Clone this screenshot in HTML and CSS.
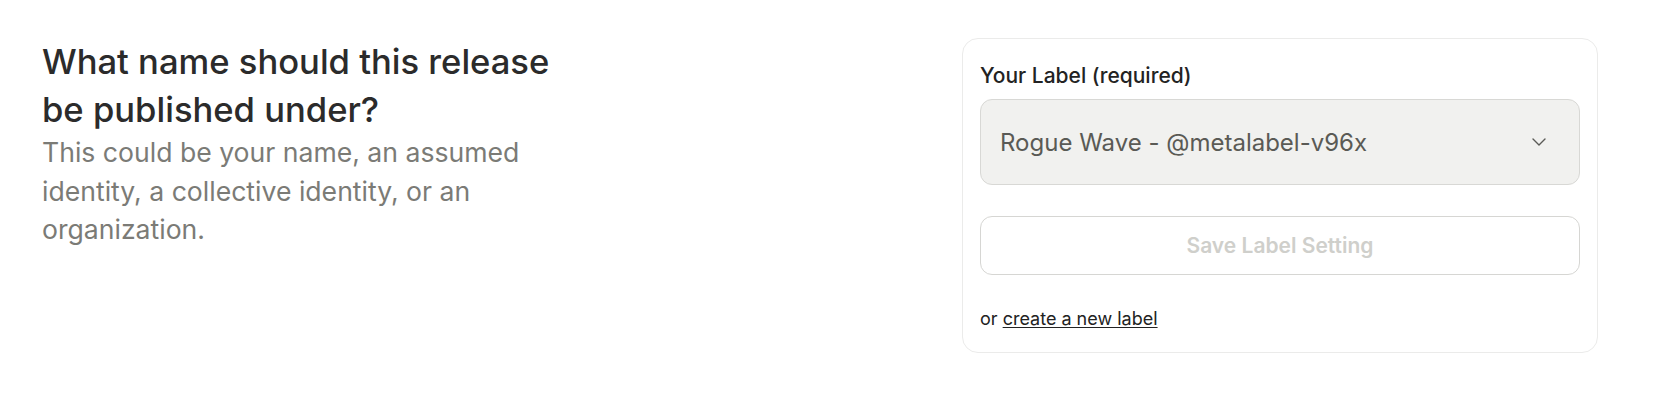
FILE: index.html
```html
<!DOCTYPE html>
<html lang="en">
<head>
<meta charset="utf-8">
<title>Label setting</title>
<link rel="stylesheet" href="styles.css">
</head>
<body>
<main class="page">
  <section class="intro">
    <h2 class="intro-title">What name should this release be published under?</h2>
    <p class="intro-text">This could be your name, an assumed identity, a collective identity, or an organization.</p>
  </section>
  <section class="card">
    <label class="field-label" for="label-select">Your Label (required)</label>
    <div class="select">
      <span class="select-value" id="label-select">Rogue Wave - @metalabel-v96x</span>
      <svg class="chevron" width="14" height="8" viewBox="0 0 14 8" aria-hidden="true"><path d="M1 1l6 6 6-6" fill="none" stroke="#5b5b57" stroke-width="1.4" stroke-linecap="round" stroke-linejoin="round"/></svg>
    </div>
    <button class="save-btn" type="button" disabled>Save Label Setting</button>
    <p class="alt">or <a href="#" class="alt-link">create a new label</a></p>
  </section>
</main>
</body>
</html>
```
FILE: styles.css
```css
* { box-sizing: border-box; }
html, body { margin: 0; padding: 0; background: #ffffff; }
body { font-family: Inter, "Noto Sans", sans-serif; color: #222222; }

.page {
  display: flex;
  justify-content: space-between;
  align-items: flex-start;
  padding: 38px 60px 0 42px;
}

.intro { width: 540px; }
.intro-title {
  margin: 0;
  font-size: 34.6px;
  line-height: 47.6px;
  font-weight: 500;
  color: #2b2b2b;
}
.intro-text {
  margin: 0;
  font-size: 26.6px;
  line-height: 38.5px;
  font-weight: 400;
  color: #7b7b76;
}

.card {
  width: 636px;
  border: 1px solid #ebebea;
  border-radius: 16px;
  padding: 23px 17px 20px;
  display: flex;
  flex-direction: column;
}
.field-label {
  font-size: 21px;
  line-height: 28px;
  font-weight: 500;
  color: #232323;
  margin-bottom: 9px;
}
.select {
  height: 86px;
  border: 1px solid #d8d8d5;
  border-radius: 12px;
  background: #f1f1ef;
  display: flex;
  align-items: center;
  justify-content: space-between;
  padding: 0 33px 0 19px;
}
.select-value {
  font-size: 24px;
  color: #5a5a55;
}
.chevron { display: block; }

.save-btn {
  margin-top: 31px;
  height: 59px;
  width: 100%;
  border: 1px solid #d6d6d3;
  border-radius: 12px;
  background: #ffffff;
  font-family: inherit;
  font-size: 21px;
  font-weight: 600;
  color: #cfcfcb;
}
.alt {
  margin: 30px 0 0;
  font-size: 18px;
  line-height: 27px;
  color: #222222;
}
.alt-link { color: #222222; text-decoration: underline; text-underline-offset: 2px; }
```
